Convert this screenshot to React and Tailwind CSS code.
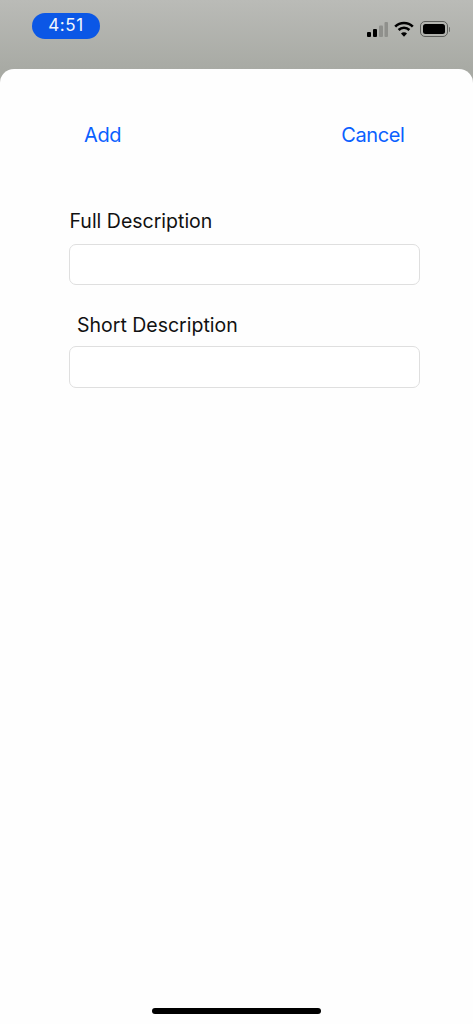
const App = () => {
  return (
    <div className="h-[1024px] w-[473px] overflow-hidden flex flex-col font-['Inter',sans-serif]">
      <div className="relative flex-1 flex flex-col bg-[#a8aaa4]">
        {/* Status bar */}
        <div className="h-[69px] shrink-0 flex items-start justify-between pl-[32px] pr-[23px] bg-gradient-to-b from-[#babbb7] to-[#a8aaa4]">
          <div className="mt-[13px] w-[68px] h-[26px] rounded-full bg-[#0b57e6] flex items-center justify-center text-[#f4f6fb] text-[17px] font-normal tracking-[0.6px]">
            4:51
          </div>
          <div className="mt-[21px] flex items-center gap-[6px]">
            <svg width="22" height="16" viewBox="0 0 22 16">
              <rect x="1" y="11" width="4" height="5" rx="1" fill="#000" />
              <rect x="7" y="8" width="4" height="8" rx="1" fill="#000" />
              <rect x="13" y="4.500" width="4" height="11.500" rx="1" fill="#8f908c" />
              <rect x="18.500" y="1" width="3.500" height="15" rx="1" fill="#8f908c" />
            </svg>
            <svg width="20" height="16" viewBox="0 0 20 16" fill="none" stroke="#000" strokeWidth="2.600">
              <path d="M1.200 5.600 A12.500 12.500 0 0 1 18.800 5.600" />
              <path d="M4.600 9 A7.700 7.700 0 0 1 15.400 9" />
              <path d="M10 15.800 L7 12.400 A4.200 4.200 0 0 1 13 12.400 Z" fill="#000" stroke="none" />
            </svg>
            <div className="flex items-center gap-[1px]">
              <div className="w-[28px] h-[16px] rounded-[5px] border border-[#5c5d5a] p-[2px]">
                <div className="w-full h-full rounded-[2.500px] bg-black" />
              </div>
              <div className="w-[1.500px] h-[5px] rounded-r-full bg-[#6b6c69]" />
            </div>
          </div>
        </div>

        {/* Sheet */}
        <div className="flex-1 bg-[#fefefe] rounded-t-[14px] flex flex-col">
          <div className="mt-[52px] pl-[84px] pr-[68.500px] flex justify-between text-[20px] leading-[28px] tracking-[-0.4px] text-[#0a60ff]">
            <button type="button">Add</button>
            <button type="button">Cancel</button>
          </div>

          <div className="mt-[59px] pl-[69px] pr-[53px] text-[19.500px] leading-[26px] text-[#111]">
            <label className="block pl-[0.500px]">Full Description</label>
            <input className="block mt-[10px] w-full h-[41px] rounded-[7px] border border-[#dfdfdf] bg-white" />
            <label className="block mt-[27px] pl-[8px]">Short Description</label>
            <input className="block mt-[8px] w-full h-[42px] rounded-[7px] border border-[#dfdfdf] bg-white" />
          </div>

          <div className="mt-auto mb-[10px] mx-auto w-[169px] h-[6px] rounded-full bg-black" />
        </div>
      </div>
    </div>
  );
};

export default App;
